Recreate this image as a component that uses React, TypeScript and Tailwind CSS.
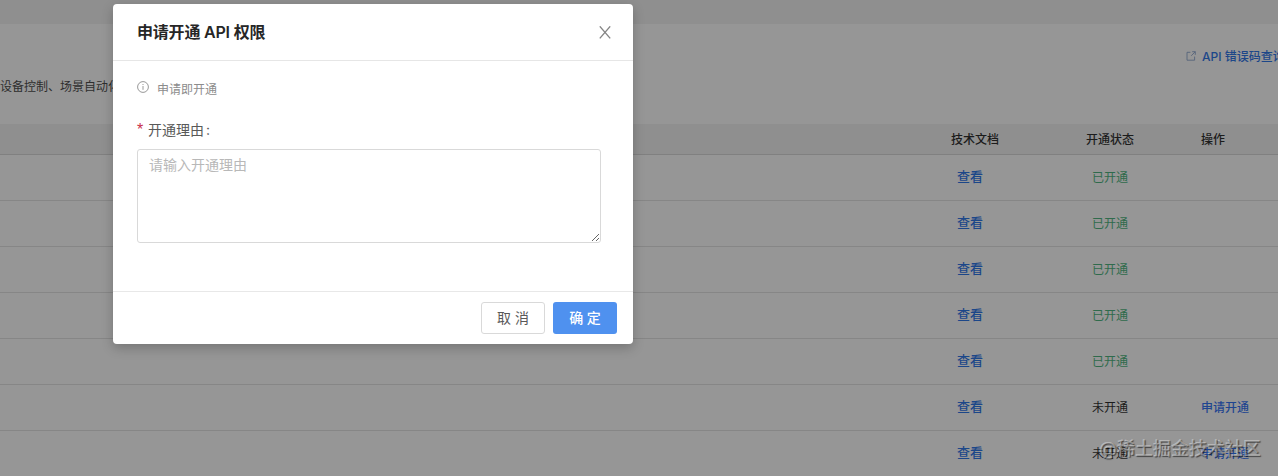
import { useState } from 'react'

const ROWS = [
  { id: 1, opened: true },
  { id: 2, opened: true },
  { id: 3, opened: true },
  { id: 4, opened: true },
  { id: 5, opened: true },
  { id: 6, opened: false },
  { id: 7, opened: false },
]

function ExternalIcon() {
  return (
    <svg width="10" height="10" viewBox="0 0 10 10" fill="none" stroke="#56647c" strokeWidth="0.9">
      <path d="M4.4 1.3H1v7.9h7.6V5.6M6.2 0.7h3.1v3.1M9.2 0.8L5.2 4.8" />
    </svg>
  )
}

function InfoIcon() {
  return (
    <svg width="12" height="12" viewBox="0 0 12 12" fill="none" stroke="#8c8c8c" strokeWidth="0.9">
      <circle cx="6" cy="6" r="5.4" />
      <path d="M6 5v3.8M6 3v1" />
    </svg>
  )
}

function CloseIcon() {
  return (
    <svg width="12" height="13" viewBox="0 0 12 13" fill="none" stroke="#858585" strokeWidth="1.4">
      <path d="M0.8 0.4L11.2 12.4M11.2 0.4L0.8 12.4" />
    </svg>
  )
}

function ApiTable() {
  return (
    <div className="text-xs">
      <div className="flex h-[31px] items-center border-b border-[#808080] bg-[#8f8f8f] pl-[951px] pt-0.5 font-medium text-[#1c1c1c]">
        <span className="w-[135px] shrink-0">技术文档</span>
        <span className="w-[115px] shrink-0">开通状态</span>
        <span className="shrink-0">操作</span>
      </div>
      {ROWS.map(row => (
        <div key={row.id} className="flex h-[46px] items-center border-b border-[#868686] pl-[957px]">
          <a className="w-[135px] shrink-0 pb-px text-[13px] font-medium text-[#1c4789]">查看</a>
          <span className={`w-[109px] shrink-0 ${row.opened ? 'text-[#2f6b4c]' : 'text-[#1c1c1c]'}`}>
            {row.opened ? '已开通' : '未开通'}
          </span>
          {!row.opened && <a className="shrink-0 font-medium text-[#1f4590]">申请开通</a>}
        </div>
      ))}
    </div>
  )
}

function ApplyModal() {
  const [reason, setReason] = useState('')

  return (
    <div className="absolute left-[113px] top-1 flex h-[340px] w-[520px] flex-col rounded-[4px] bg-white shadow-[0_4px_12px_rgba(0,0,0,0.22)]">
      <div className="flex h-[57px] shrink-0 items-center justify-between border-b border-[#e6e6e6] pl-6 pr-[22px]">
        <h2 className="text-base font-semibold tracking-[-0.2px] text-[#262626]">申请开通 API 权限</h2>
        <button type="button" aria-label="关闭">
          <CloseIcon />
        </button>
      </div>

      <div className="flex-1 px-6 pt-5">
        <div className="flex h-4 items-start gap-2">
          <InfoIcon />
          <span className="pt-px text-xs text-[#8c8c8c]">申请即开通</span>
        </div>
        <label className="mt-[21px] flex h-6 items-center text-sm text-[#595959]">
          <span className="mr-1 w-[7px] font-['Liberation_Sans'] text-base font-medium text-[#c8314b]">*</span>
          开通理由<span className="ml-0.5">:</span>
        </label>
        <textarea
          value={reason}
          onChange={e => setReason(e.target.value)}
          placeholder="请输入开通理由"
          className="mt-[7px] block h-[94px] w-[464px] resize rounded-[3px] border border-[#d9d9d9] px-[11px] py-1 text-sm leading-[22px] placeholder:text-[#b8b8b8]"
        />
      </div>

      <div className="flex h-[53px] shrink-0 items-center justify-end gap-2 border-t border-[#e8e8e8] px-4">
        <button type="button" className="h-8 w-16 rounded-[3px] border border-[#d9d9d9] text-sm text-[#595959]">
          取 消
        </button>
        <button type="button" className="h-8 w-16 rounded-[3px] bg-[#4f91ef] text-sm font-medium text-white">
          确 定
        </button>
      </div>
    </div>
  )
}

export default function App() {
  return (
    <div className="relative h-[476px] w-[1278px] overflow-hidden bg-[#969696] font-['Inter','Noto_Sans_CJK_SC',sans-serif]">
      <div className="h-6 bg-[#8f8f8f]" />
      <div className="flex h-[100px] justify-between">
        <p className="mt-[55px] h-4 whitespace-nowrap text-xs text-[#2e2e2e]">设备控制、场景自动化</p>
        <a className="mt-[25px] flex h-4 w-[92px] items-center gap-1.5 whitespace-nowrap text-xs font-medium text-[#1c4789]">
          <span className="shrink-0 pb-0.5">
            <ExternalIcon />
          </span>
          API 错误码查询
        </a>
      </div>
      <ApiTable />
      <ApplyModal />
      <div className="absolute left-[1099px] top-[435px] whitespace-nowrap text-[18px] font-medium text-white/40 [text-shadow:1px_1px_1px_rgba(0,0,0,0.55)]">
        @稀土掘金技术社区
      </div>
    </div>
  )
}
